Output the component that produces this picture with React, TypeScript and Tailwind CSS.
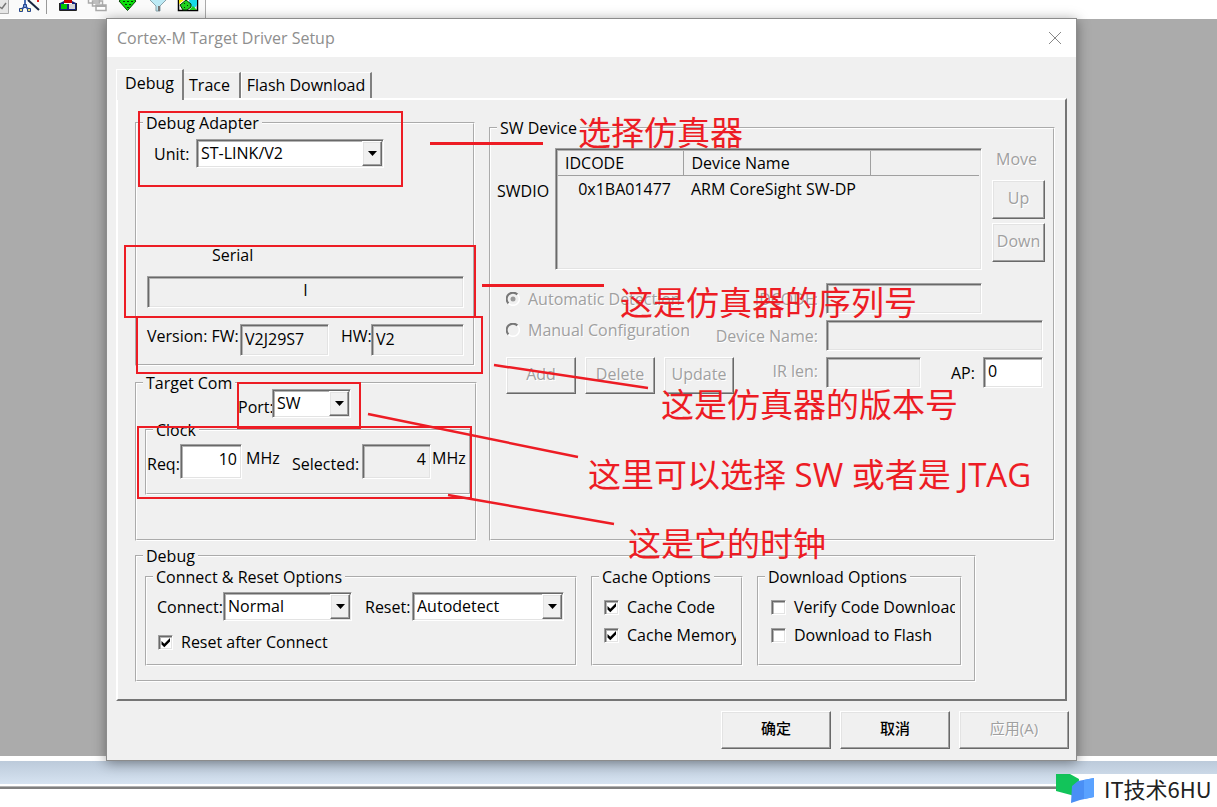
import React from 'react'

const sunken =
  "border border-t-[#a0a0a0] border-l-[#a0a0a0] border-r-white border-b-white shadow-[inset_1px_1px_#696969,inset_2px_2px_#b4b4b4,inset_-1px_-1px_#e3e3e3]";
const raised =
  "border border-t-white border-l-white border-r-[#696969] border-b-[#696969] shadow-[inset_-1px_-1px_#a0a0a0,inset_1px_1px_#e3e3e3]";
const faded = "text-[#a0a0a0] [text-shadow:1px_1px_0_white]";

function Group({ title, className = "", children }: { title: string; className?: string; children: React.ReactNode }) {
  return (
    <fieldset className={`min-w-0 border-2 border-white [border-style:groove] ${className}`}>
      <legend className="ml-1.5 px-[3px]">{title}</legend>
      {children}
    </fieldset>
  )
}

function Combo({ id, value, className }: { id: string; value: string; className: string }) {
  return (
    <div className={`relative h-[29px] ${className}`}>
      <select id={id} defaultValue={value} className={`h-full w-full appearance-none bg-white pb-0.5 pl-1 ${sunken}`}>
        <option>{value}</option>
      </select>
      <span className={`pointer-events-none absolute top-0.5 right-0.5 bottom-0.5 flex w-5 items-center justify-center bg-[#f0f0f0] ${raised}`}>
        <svg width="9" height="5" viewBox="0 0 9 5"><path d="M0 0h9L4.500 5z" fill="#000" /></svg>
      </span>
    </div>
  )
}

function Field({ id, value = "", label, disabled, className = "" }: { id: string; value?: string; label?: string; disabled?: boolean; className?: string }) {
  return (
    <input
      id={id}
      aria-label={label}
      defaultValue={value}
      readOnly={disabled}
      className={`min-w-0 px-1 ${disabled ? "bg-[#f0f0f0]" : "bg-white"} ${sunken} ${className}`}
    />
  )
}

function Check({ label, checked }: { label: string; checked?: boolean }) {
  return (
    <label className="flex items-center gap-2 overflow-hidden whitespace-nowrap">
      <span className="relative size-[15px] shrink-0">
        <input type="checkbox" defaultChecked={checked} className={`peer block size-full appearance-none bg-white ${sunken}`} />
        <svg className="pointer-events-none absolute inset-0 hidden peer-checked:block" width="15" height="15" viewBox="0 0 15 15">
          <path d="M3.500 6v3.500l2.800 2.700L12 6.500V3L6.300 8.700z" fill="#000" />
        </svg>
      </span>
      {label}
    </label>
  )
}

function Radio({ label, checked, className = "" }: { label: string; checked?: boolean; className?: string }) {
  return (
    <label className={`flex items-center gap-2 whitespace-nowrap ${faded} ${className}`}>
      <span className="relative size-[14px] shrink-0">
        <input type="radio" name="detection" disabled defaultChecked={checked} className="peer block size-full appearance-none" />
        <svg className="absolute inset-0" width="14" height="14" viewBox="0 0 14 14" fill="none" strokeWidth="1.500">
          <path d="M2.500 11.500A6.200 6.200 0 0 1 11.500 2.500" stroke="#777" strokeWidth="2" />
          <path d="M2.500 11.500A6.200 6.200 0 0 0 11.500 2.500" stroke="#fff" />
        </svg>
        <svg className="absolute inset-0 hidden peer-checked:block" width="14" height="14" viewBox="0 0 14 14">
          <circle cx="7" cy="7" r="2.500" fill="#999" />
        </svg>
      </span>
      {label}
    </label>
  )
}

function Button({ children, disabled, className = "" }: { children: React.ReactNode; disabled?: boolean; className?: string }) {
  return (
    <button type="button" disabled={disabled} className={`bg-[#f0f0f0] pb-1 ${raised} ${disabled ? faded : ""} ${className}`}>
      {children}
    </button>
  )
}

function Toolbar() {
  return (
    <header className="h-[19px] bg-white">
      <svg width="206" height="19" viewBox="0 0 206 19">
        <rect width="205" height="18" fill="#fafafa" />
        <path d="M0 0h9v14H0z" fill="#e6e6e6" />
        <path d="M8.500 0v13.500H0" stroke="#aaa" fill="none" />
        <path d="M0 7l2 1.500L6 3" stroke="#777" strokeWidth="1.500" fill="none" />
        {/* wand */}
        <path d="M25 0v7M21 10l4-4 4 4" stroke="#4a6fb5" strokeWidth="2" fill="none" />
        <path d="M19.500 8.500h3v3h-3zM27.500 8.500h3v3h-3zM23.500 4.500h3v3h-3z" fill="#6f97dc" stroke="#27458a" />
        <path d="M20 9h2v2h-2zM28 9h2v2h-2z" fill="#e8dc7a" />
        <path d="M28 0l11 10" stroke="#182440" strokeWidth="2" />
        <path d="M37 0h2v2h-2z" fill="#e02020" />
        <path d="M46.500 0v14" stroke="#999" />
        {/* blocks */}
        <path d="M64 0h8v3h-8z" fill="#c00000" />
        <path d="M60 3l4-2v3h8V1l4 2v8H60z" fill="#16217c" />
        <path d="M61 4h6v5h-6z" fill="#00c800" />
        <path d="M69 4h6v5h-6z" fill="#d2d2d2" />
        <path d="M59.500 3v7.500h17V3" stroke="#222" fill="none" />
        {/* stacked windows */}
        <g fill="#fff" stroke="#aaa" strokeWidth="1.500">
          <path d="M88.500-2h11v5h-11zM92.500 1h10v5h-10zM96 5h10v5.500H96z" />
        </g>
        <path d="M96 6h10" stroke="#aaa" strokeWidth="2" />
        {/* diamond */}
        <path d="M119 1l4-3h9l4 3-8.500 9.500z" fill="#0be00b" stroke="#064006" />
        <path d="M123 1h2v1h-2zM127 1h2v1h-2zM131 1h2v1h-2zM125 4h2v1h-2zM129 4h2v1h-2zM127 7h2v1h-2z" fill="#053505" />
        {/* funnel */}
        <path d="M149-1h18l-7 7v5h-4V6z" fill="#bdeaf5" stroke="#8aa5ad" />
        <path d="M158 6h2v5h-2z" fill="#777" />
        {/* environment */}
        <path d="M178.500-1h19v11.500h-19z" fill="#fff" stroke="#000" strokeWidth="1.500" />
        <path d="M179 0h5l-5 4z" fill="#ffe800" />
        <path d="M189 0h8v5l-3 4-4-4z" fill="#18dbe8" />
        <path d="M180 5l6-5 5 4v3l-4 3h-4z" fill="#1ed21e" stroke="#053505" />
        <path d="M184 3h1v1h-1zM187 5h1v1h-1zM184 7h1v1h-1z" fill="#053505" />
        <path d="M190 9l3-3 4 4h-7z" fill="#1ed21e" />
        <path d="M205.500 0v18" stroke="#aaa" />
      </svg>
    </header>
  )
}

function DebugAdapter() {
  return (
    <Group title="Debug Adapter" className="mr-0.5">
      <div className="flex items-center pt-1.5 pl-[17px]">
        <label htmlFor="unit" className="w-[42px]">Unit:</label>
        <Combo id="unit" value="ST-LINK/V2" className="w-[188px]" />
      </div>
      <div className="mt-[77px] flex flex-col pr-[9px] pl-2.5">
        <label htmlFor="serial" className="pl-[65px]">Serial</label>
        <Field id="serial" value="I" disabled className="mt-[11px] h-8 pb-1 text-center" />
      </div>
      <div className="mt-4 flex pr-[9px] pb-2 pl-2.5">
        <label htmlFor="fw" className="w-[93px] pt-0.5 whitespace-nowrap">Version: FW:</label>
        <Field id="fw" value="V2J29S7" disabled className="h-8 w-[89px] pb-0.5" />
        <label htmlFor="hw" className="ml-3 w-[30px] pt-0.5">HW:</label>
        <Field id="hw" value="V2" disabled className="h-8 flex-1 pb-0.5" />
      </div>
    </Group>
  )
}

function TargetCom() {
  return (
    <Group title="Target Com" className="mt-[7px] flex-1 pb-11">
      <div className="-mt-1 flex items-center pl-[101px]">
        <label htmlFor="port" className="w-[34px] pt-1.5">Port:</label>
        <Combo id="port" value="SW" className="w-[79px]" />
      </div>
      <Group title="Clock" className="mt-0.5 mr-1 ml-2">
        <div className="flex items-center pt-1 pb-3.5 whitespace-nowrap">
          <label htmlFor="req" className="w-[33px] pt-1">Req:</label>
          <Field id="req" value="10" className="h-[35px] w-[62px] pb-1.5 text-right" />
          <span className="ml-1 w-[46px] self-start pt-1">MHz</span>
          <label htmlFor="selected" className="w-[70px] pt-1">Selected:</label>
          <Field id="selected" value="4" disabled className="h-[35px] w-[69px] pb-1.5 text-right" />
          <span className="ml-px w-[34px] self-start pt-1">MHz</span>
        </div>
      </Group>
    </Group>
  )
}

function SwDevice() {
  return (
    <Group title="SW Device" className="mt-[5px] flex-1">
      <div className="flex pt-2.5 pr-2 pl-1.5">
        <span className="w-[58px] pt-[33px]">SWDIO</span>
        <div className={`h-[122px] flex-1 p-0.5 ${sunken}`}>
          <table className="w-full table-fixed text-left">
            <thead>
              <tr className="h-6 border-b border-[#a0a0a0]">
                <th className="w-[125px] border-r border-[#a0a0a0] pl-[7px] font-normal">IDCODE</th>
                <th className="w-[187px] border-r border-[#a0a0a0] pl-2 font-normal">Device Name</th>
                <th></th>
              </tr>
            </thead>
            <tbody>
              <tr className="h-7">
                <td className="pr-3 text-right">0x1BA01477</td>
                <td className="pl-2 whitespace-nowrap">ARM CoreSight SW-DP</td>
                <td></td>
              </tr>
            </tbody>
          </table>
        </div>
        <div className="ml-2.5 flex w-[53px] flex-col pt-px">
          <span className={`pr-1 text-center ${faded}`}>Move</span>
          <Button disabled className="mt-[11px] h-[39px]">Up</Button>
          <Button disabled className="mt-1 h-[39px]">Down</Button>
        </div>
      </div>
      <div className="mt-[13px] flex flex-col gap-1.5 pr-2.5 pl-[15px]">
        <div className="flex h-[31px] items-center justify-between">
          <Radio label="Automatic Detection" checked />
          <div className="flex items-center">
            <label htmlFor="idcode" className={`pr-2 ${faded}`}>IDCODE:</label>
            <div className="flex w-[217px]"><Field id="idcode" disabled className="h-[31px] w-[156px]" /></div>
          </div>
        </div>
        <div className="flex h-[31px] items-center justify-between">
          <Radio label="Manual Configuration" className="self-start" />
          <div className="flex items-center">
            <label htmlFor="device" className={`pr-2 whitespace-nowrap ${faded}`}>Device Name:</label>
            <Field id="device" disabled className="h-[31px] w-[217px]" />
          </div>
        </div>
        <div className="flex justify-between">
          <div className="flex gap-[9px]">
            <Button disabled className="h-[37px] w-[70px]">Add</Button>
            <Button disabled className="h-[37px] w-[70px]">Delete</Button>
            <Button disabled className="h-[37px] w-[70px]">Update</Button>
          </div>
          <div className="flex whitespace-nowrap">
            <label htmlFor="irlen" className={`pt-1 pr-2 ${faded}`}>IR len:</label>
            <div className="flex w-[217px]">
              <Field id="irlen" disabled className="h-[31px] w-[95px]" />
              <label htmlFor="ap" className="ml-[30px] w-[32px] pt-1.5">AP:</label>
              <Field id="ap" value="0" className="h-[31px] flex-1 pb-1" />
            </div>
          </div>
        </div>
      </div>
    </Group>
  )
}

function DebugOptions() {
  return (
    <Group title="Debug" className="mt-[5px] w-[841px] max-w-full">
      <div className="flex gap-3.5 pt-px pr-3 pb-3.5 pl-2">
        <Group title="Connect & Reset Options" className="flex-1 pb-3">
          <div className="flex items-center pt-[5px] pl-2.5">
            <label htmlFor="connect" className="w-[66px]">Connect:</label>
            <Combo id="connect" value="Normal" className="w-[129px]" />
            <label htmlFor="reset" className="ml-[13px] w-[47px]">Reset:</label>
            <Combo id="reset" value="Autodetect" className="w-[152px]" />
          </div>
          <div className="mt-[11px] pl-[11px]">
            <Check label="Reset after Connect" checked />
          </div>
        </Group>
        <Group title="Cache Options" className="w-[152px]">
          <div className="flex flex-col gap-2 pt-2.5 pr-[5px] pl-[11px]">
            <Check label="Cache Code" checked />
            <Check label="Cache Memory" checked />
          </div>
        </Group>
        <Group title="Download Options" className="w-[205px]">
          <div className="flex flex-col gap-2 pt-2.5 pr-[5px] pl-3">
            <Check label="Verify Code Download" />
            <Check label="Download to Flash" />
          </div>
        </Group>
      </div>
    </Group>
  )
}

function SetupDialog() {
  return (
    <section className="relative z-10 -mt-px mr-[140px] -mb-[5px] ml-[106px] border border-[#8c8c8c] bg-[#f0f0f0] shadow-[0_2px_12px_rgba(0,0,0,0.4)]">
      <div className="flex h-[38px] items-center justify-between bg-white pr-3.5 pl-2.5">
        <h1 className="text-[#8e8e8e]">Cortex-M Target Driver Setup</h1>
        <button type="button" aria-label="Close">
          <svg width="14" height="14" viewBox="0 0 14 14"><path d="M1 1l12 12M13 1L1 13" stroke="#888" /></svg>
        </button>
      </div>
      <div className="px-[9px] pt-3">
        <div role="tablist" className="flex items-end">
          <button type="button" role="tab" aria-selected="true" className="relative z-10 -mb-0.5 h-[31px] w-[68px] border-t border-l border-t-white border-l-white border-r-2 border-r-[#808080] bg-[#f0f0f0] pb-1">Debug</button>
          <button type="button" role="tab" aria-selected="false" className="h-[26px] w-[57px] border-t border-t-white border-r-2 border-r-[#808080] pr-1 pb-0.5">Trace</button>
          <button type="button" role="tab" aria-selected="false" className="h-[26px] w-[131px] border-t border-l border-t-white border-l-white border-r-2 border-r-[#808080] pb-0.5">Flash Download</button>
        </div>
        <div role="tabpanel" className="border-2 border-t-white border-r-[#757575] border-b-[#757575] border-l-white pt-[13px] pr-2.5 pb-[17px] pl-[17px]">
          <div className="flex gap-3">
            <div className="flex w-[342px] flex-col">
              <DebugAdapter />
              <TargetCom />
            </div>
            <SwDevice />
          </div>
          <DebugOptions />
        </div>
      </div>
      <div className="flex justify-end gap-[9px] pt-2.5 pr-[7px] pb-[11px] text-[15px]">
        <Button className="h-[38px] w-[110px] font-medium">确定</Button>
        <Button className="h-[38px] w-[110px] font-medium">取消</Button>
        <Button disabled className="h-[38px] w-[110px]">应用(A)</Button>
      </div>
    </section>
  )
}

// Hand drawn marks and notes lying over the dialog
function Notes() {
  return (
    <div className="pointer-events-none absolute inset-0 z-20 text-[33px] leading-10 whitespace-nowrap text-[#ed1c24]">
      <svg className="absolute inset-0" width="700" height="560" viewBox="0 0 700 560" fill="none" stroke="#ed1c24" strokeWidth="2">
        <path d="M139 112h263v74H139zM125 246h350v71H125zM137 317h345v56H137zM238 383h122v45H238zM138 427h333v71H138z" />
        <path d="M430 143.500h113M482 285.500h122" strokeWidth="3" />
        <path d="M494 365l154 23M368 414l210 43M448 495l166 29" strokeWidth="2.500" />
      </svg>
      <span className="absolute top-[113px] left-[578px]">选择仿真器</span>
      <span className="absolute top-[283px] left-[620px]">这是仿真器的序列号</span>
      <span className="absolute top-[385px] left-[661px]">这是仿真器的版本号</span>
      <span className="absolute top-[455px] left-[588px]">这里可以选择 SW 或者是 JTAG</span>
      <span className="absolute top-[524px] left-[628px]">这是它的时钟</span>
    </div>
  )
}

export default function App() {
  return (
    <div className="relative flex min-h-screen flex-col overflow-hidden bg-white font-['Open_Sans','Noto_Sans_CJK_SC',sans-serif] text-base leading-5 text-black">
      <Toolbar />
      <main className="flex-1 bg-[#ababab]">
        <SetupDialog />
      </main>
      <footer className="relative">
        <div className="h-[5px] bg-white" />
        <div className="h-[23px] bg-gradient-to-b from-[#bccada] to-[#d6e3f1]" />
        <div className="mt-0.5 h-[3px] border-t border-[#b4b4b4] bg-[#808080]" />
        <div className="h-[18px]" />
        <div className="absolute right-0 bottom-0 flex h-[33px] w-[161px] bg-white">
          <svg width="48" height="33" viewBox="0 0 48 33">
            <path d="M0 0h14l9 5-1 19-7-3-15-4z" fill="#12c45a" />
            <path d="M16 12l6-5 16-3v19l-14 3-9 3z" fill="#4a8ff5" />
            <path d="M28 6l10-2v19l-10 2z" fill="#5aa2ff" />
          </svg>
          <span className="font-['Noto_Sans_CJK_SC',sans-serif] text-[22px] leading-7 text-[#222]">IT技术6HU</span>
        </div>
      </footer>
      <Notes />
    </div>
  )
}
